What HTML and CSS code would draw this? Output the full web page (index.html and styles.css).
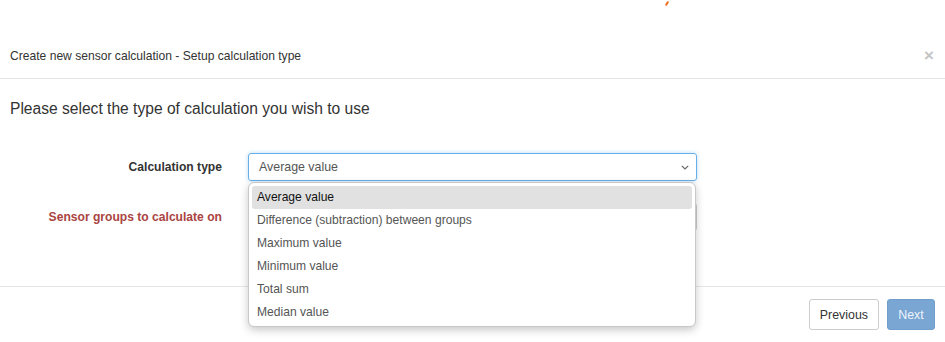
FILE: index.html
```html
<!DOCTYPE html>
<html lang="en">
<head>
  <meta charset="UTF-8">
  <title>Create new sensor calculation</title>
  <link rel="stylesheet" href="styles.css">
</head>
<body>
  <div class="backdrop">
    <span class="spark"></span>
  </div>

  <div class="modal">
    <div class="modal-header">
      <span class="modal-title">Create new sensor calculation - Setup calculation type</span>
      <span class="close">&times;</span>
    </div>

    <div class="modal-body">
      <h4>Please select the type of calculation you wish to use</h4>

      <div class="form-row">
        <label>Calculation type</label>
        <div class="select-wrap">
          <div class="select focused">
            <span>Average value</span>
            <svg class="chevron" width="8" height="5" viewBox="0 0 8 5"><path d="M0.8 0.8l3.2 3.2 3.2-3.2" fill="none" stroke="#666" stroke-width="1.2"/></svg>
          </div>
          <!-- open native option list -->
          <ul class="options">
            <li class="active">Average value</li>
            <li>Difference (subtraction) between groups</li>
            <li>Maximum value</li>
            <li>Minimum value</li>
            <li>Total sum</li>
            <li>Median value</li>
          </ul>
        </div>
      </div>

      <div class="form-row">
        <label class="error">Sensor groups to calculate on</label>
        <div class="select-wrap">
          <div class="select"></div>
        </div>
      </div>
    </div>

    <div class="modal-footer">
      <button class="btn">Previous</button>
      <button class="btn btn-primary" disabled>Next</button>
    </div>
  </div>
</body>
</html>
```

FILE: styles.css
```css
body {
  margin: 0;
  background-color: #fff;
  color: #333;
  font-family: "Liberation Sans", Arial, sans-serif;
  font-size: 12.2px;
  overflow: hidden;
}

.backdrop {
  height: 33px;
  position: relative;
}

.spark {
  position: absolute;
  left: 666px;
  top: 1px;
  width: 2px;
  height: 5px;
  background-color: #f06a1c;
  transform: rotate(30deg);
  border-radius: 1px;
}

.modal {
  background-color: #fff;
  height: 309px;
}

.modal-header {
  height: 45px;
  padding: 0 10px;
  display: flex;
  align-items: center;
  justify-content: space-between;
  border-bottom: 1px solid #e5e5e5;
}

.modal-title {
  font-size: 12.1px;
  color: #333;
}

.close {
  color: #c4c4c4;
  font-size: 17px;
  font-weight: bold;
  margin-right: 1px;
}

.modal-body {
  padding: 19px 10px 55px;
}

h4 {
  margin: 0 0 33px;
  font-size: 15.6px;
  font-weight: normal;
  line-height: 22px;
}

.form-row {
  display: flex;
  align-items: center;
  margin-bottom: 22px;
}

.form-row:last-child {
  margin-bottom: 0;
}

.form-row label {
  width: 212px;
  margin-right: 26px;
  text-align: right;
  font-weight: bold;
  font-size: 12.1px;
}

.form-row label.error {
  color: #a94442;
}

.select-wrap {
  position: relative;
  width: 449px;
}

.select {
  height: 28px;
  box-sizing: border-box;
  border: 1px solid #ccc;
  border-radius: 3px;
  display: flex;
  align-items: center;
  justify-content: space-between;
  padding: 0 7px 0 10px;
  color: #555;
  font-size: 12.4px;
}

.select.focused {
  border-color: #66afe9;
  box-shadow: 0 0 4px rgba(102, 175, 233, 0.45);
}

.chevron {
  margin-top: 1px;
}

.options {
  position: absolute;
  left: 0;
  top: 29px;
  width: 448px;
  box-sizing: border-box;
  margin: 0;
  padding: 3px 3px 2px;
  list-style: none;
  background-color: #fff;
  border: 1px solid #c8c8c8;
  border-radius: 6px;
  box-shadow: 0 3px 8px rgba(0, 0, 0, 0.22);
  z-index: 2;
}

.options li {
  height: 23px;
  line-height: 23px;
  padding-left: 5px;
  color: #555;
  border-radius: 3px;
  font-size: 12.1px;
}

.options li.active {
  background-color: #e1e1e1;
  color: #111;
}

.modal-footer {
  border-top: 1px solid #e5e5e5;
  padding: 12px 10px;
  display: flex;
  justify-content: flex-end;
  gap: 8px;
}

.btn {
  height: 31px;
  padding: 0 10px;
  font-family: inherit;
  font-size: 12.4px;
  color: #333;
  background-color: #fff;
  border: 1px solid #ccc;
  border-radius: 3px;
}

.btn-primary {
  width: 48px;
  padding: 0;
  color: #eef4fa;
  background-color: #7aa6d4;
  border-color: #6f9dcc;
}
```
